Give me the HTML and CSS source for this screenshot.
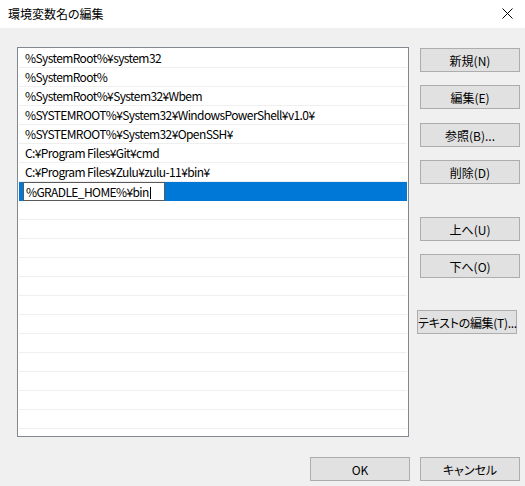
FILE: index.html
```html
<!DOCTYPE html>
<html lang="ja">

<head>
    <meta charset="UTF-8">
    <title>環境変数名の編集</title>
    <link rel="stylesheet" href="styles.css">
</head>

<body>

    <div class="dialog">
        <div class="titlebar">
            <span class="title">環境変数名の編集</span>
            <span class="close">
                <svg width="11" height="11" viewBox="0 0 11 11">
                    <path d="M0.5 0.5 L10.5 10.5 M10.5 0.5 L0.5 10.5" stroke="#000" stroke-width="1" fill="none" />
                </svg>
            </span>
        </div>

        <div class="content">
            <div class="list">
                <div class="row">%SystemRoot%¥system32</div>
                <div class="row">%SystemRoot%</div>
                <div class="row">%SystemRoot%¥System32¥Wbem</div>
                <div class="row">%SYSTEMROOT%¥System32¥WindowsPowerShell¥v1.0¥</div>
                <div class="row">%SYSTEMROOT%¥System32¥OpenSSH¥</div>
                <div class="row">C:¥Program Files¥Git¥cmd</div>
                <div class="row">C:¥Program Files¥Zulu¥zulu-11¥bin¥</div>
                <div class="row selected">
                    <div class="edit-box">%GRADLE_HOME%¥bin<span class="caret"></span></div>
                </div>
                <div class="row"></div>
                <div class="row"></div>
                <div class="row"></div>
                <div class="row"></div>
                <div class="row"></div>
                <div class="row"></div>
                <div class="row"></div>
                <div class="row"></div>
                <div class="row"></div>
                <div class="row"></div>
                <div class="row"></div>
                <div class="row"></div>
                <div class="row"></div>
            </div>

            <div class="side">
                <button class="btn">新規(N)</button>
                <button class="btn gap-s">編集(E)</button>
                <button class="btn gap-m">参照(B)...</button>
                <button class="btn gap-s">削除(D)</button>
                <button class="btn gap-l">上へ(U)</button>
                <button class="btn gap-s">下へ(O)</button>
                <button class="btn gap-l text-edit">テキストの編集(T)...</button>
            </div>
        </div>

        <div class="footer">
            <button class="btn">OK</button>
            <button class="btn">キャンセル</button>
        </div>
    </div>

</body>

</html>
```

FILE: styles.css
```css
:root {
    --color-window: #f0f0f0;
    --color-text: #000000;
    --color-list-border: #828790;
    --color-row-line: #efefef;
    --color-selected: #0078d7;
    --color-button: #e1e1e1;
    --color-button-border: #adadad;
    --font-family: "Noto Sans CJK JP", "Noto Sans", sans-serif;
}

html,
body {
    margin: 0;
    padding: 0;
}

body {
    width: 525px;
    height: 486px;
    overflow: hidden;
    font-family: var(--font-family);
    font-size: 12px;
    font-feature-settings: "palt";
    color: var(--color-text);
    background-color: var(--color-window);
}

.dialog {
    display: flex;
    flex-direction: column;
    height: 486px;
}

/* title bar */
.titlebar {
    display: flex;
    align-items: center;
    justify-content: space-between;
    height: 28px;
    padding: 0 12px 0 8px;
    background-color: #ffffff;
}

.title {
    font-size: 12px;
    line-height: 1;
    margin-top: -1px;
}

.close {
    display: flex;
    margin-top: -1px;
}

/* main area */
.content {
    display: flex;
    align-items: flex-start;
    gap: 11px;
    padding: 19px 0 0 17px;
}

.list {
    box-sizing: border-box;
    width: 392px;
    height: 390px;
    padding-top: 1px;
    background-color: #ffffff;
    border: 1px solid var(--color-list-border);
    overflow: hidden;
}

.row {
    position: relative;
    box-sizing: border-box;
    height: 19px;
    margin: 0 1px;
    padding-left: 6px;
    line-height: 18px;
    letter-spacing: -0.6px;
    white-space: nowrap;
    border-bottom: 1px solid var(--color-row-line);
}

.row.selected {
    background-color: var(--color-selected);
    border-bottom-color: var(--color-selected);
}

.edit-box {
    position: absolute;
    left: 4px;
    top: 0;
    box-sizing: border-box;
    width: 142px;
    height: 19px;
    padding-left: 2px;
    line-height: 17px;
    background-color: #ffffff;
    border: 1px solid #5a5a5a;
}

.caret {
    display: inline-block;
    width: 1px;
    height: 12px;
    margin-left: 1px;
    vertical-align: -2px;
    background-color: #000000;
}

/* buttons */
.side {
    display: flex;
    flex-direction: column;
    padding-top: 1px;
}

.btn {
    box-sizing: border-box;
    width: 100px;
    height: 24px;
    padding: 0;
    font-family: var(--font-family);
    font-size: 12px;
    font-feature-settings: "palt";
    white-space: nowrap;
    color: var(--color-text);
    background-color: var(--color-button);
    border: 1px solid var(--color-button-border);
    border-radius: 0;
}

.gap-s {
    margin-top: 13px;
}

.gap-m {
    margin-top: 14px;
}

.gap-l {
    margin-top: 33px;
}

.text-edit {
    margin-left: -3px;
    margin-top: 32px;
    letter-spacing: -0.3px;
}

.footer {
    display: flex;
    justify-content: flex-end;
    gap: 10px;
    padding: 20px 5px 0 0;
}
```
